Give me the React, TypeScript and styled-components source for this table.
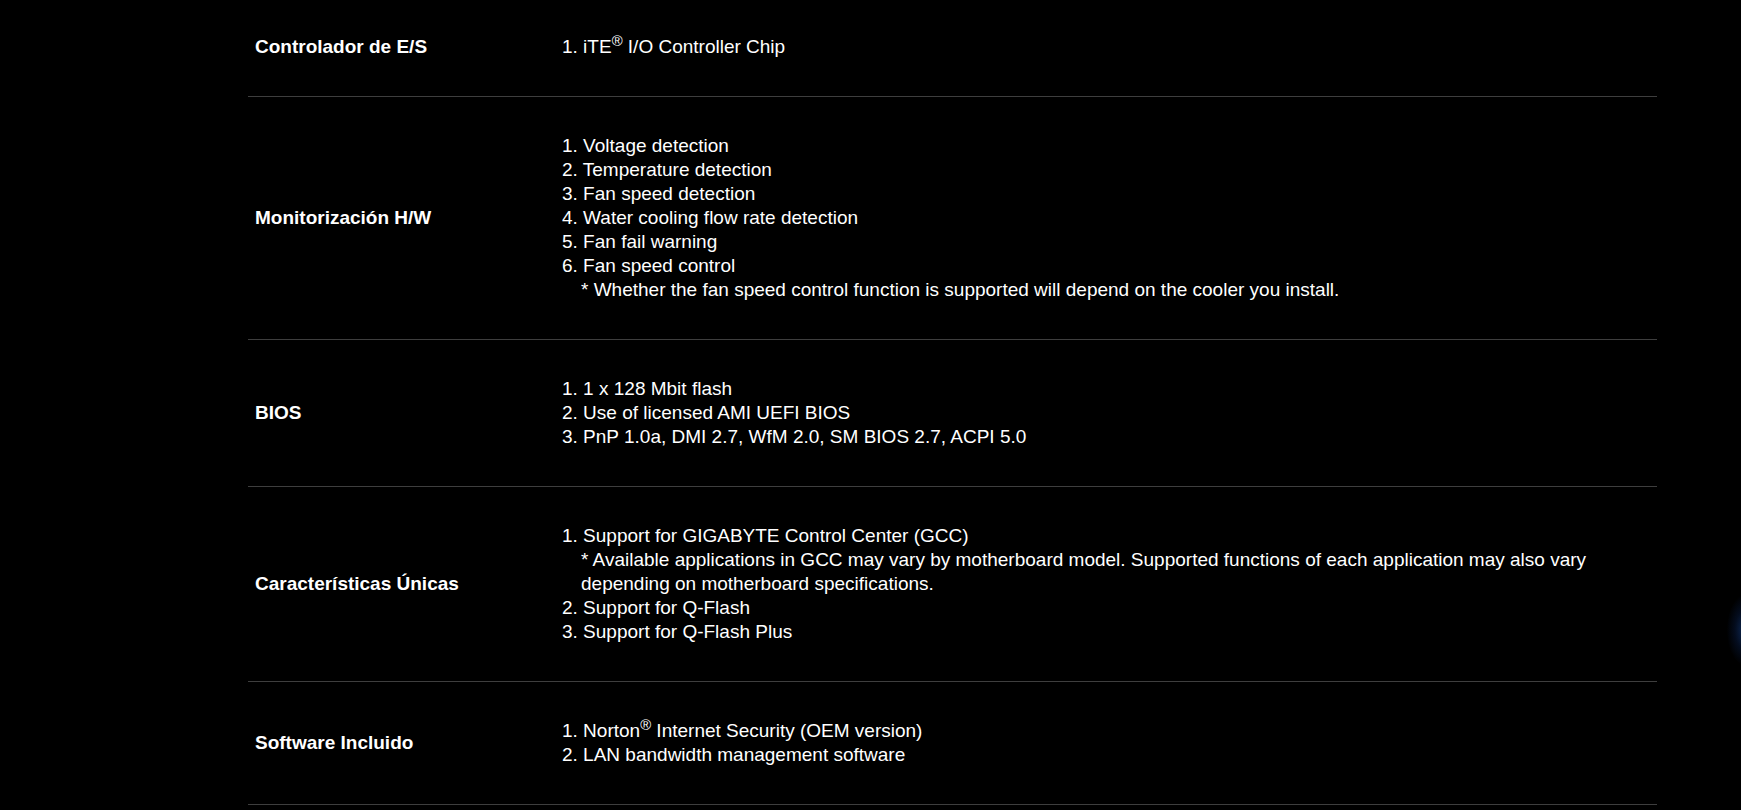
import React from "react";
import styled, { createGlobalStyle } from "styled-components";

const GlobalStyle = createGlobalStyle`
  html, body {
    margin: 0;
    padding: 0;
    background: #000;
  }
  body {
    font-family: "Liberation Sans", Arial, sans-serif;
    color: #fff;
    overflow: hidden;
  }
`;

const Page = styled.div`
  position: relative;
  width: 1741px;
  height: 810px;
  overflow: hidden;
  background: #000;
  padding: 0 84px 0 248px;
  box-sizing: border-box;
`;

const SpecTable = styled.div`
  display: flex;
  flex-direction: column;
  margin-top: -2px;
`;

const Row = styled.div`
  display: grid;
  grid-template-columns: 314px 1fr;
  align-items: center;
  padding: 37px 0;
  border-bottom: 1px solid #3e3e3e;
`;

const Label = styled.div`
  padding-left: 7px;
  font-size: 19px;
  font-weight: 700;
  line-height: 24px;
  color: #fff;
`;

const Value = styled.div`
  padding-right: 8px;
  font-size: 19px;
  line-height: 24px;
  color: #fff;
`;

const Item = styled.div``;

const Note = styled.div`
  padding-left: 19px;
`;

const Sup = styled.sup`
  font-size: 0.78em;
  line-height: 0;
  vertical-align: 0.5em;
`;

const Glow = styled.div`
  position: absolute;
  right: -22px;
  top: 595px;
  width: 36px;
  height: 70px;
  border-radius: 50%;
  background: radial-gradient(
    ellipse at center,
    rgba(30, 90, 190, 0.45) 0%,
    rgba(15, 50, 120, 0.25) 40%,
    rgba(0, 0, 0, 0) 72%
  );
`;

type Line = { text: React.ReactNode; note?: boolean };

const specs: { label: string; lines: Line[] }[] = [
  {
    label: "Controlador de E/S",
    lines: [
      {
        text: (
          <>
            1. iTE<Sup>®</Sup> I/O Controller Chip
          </>
        ),
      },
    ],
  },
  {
    label: "Monitorización H/W",
    lines: [
      { text: "1. Voltage detection" },
      { text: "2. Temperature detection" },
      { text: "3. Fan speed detection" },
      { text: "4. Water cooling flow rate detection" },
      { text: "5. Fan fail warning" },
      { text: "6. Fan speed control" },
      {
        text: "* Whether the fan speed control function is supported will depend on the cooler you install.",
        note: true,
      },
    ],
  },
  {
    label: "BIOS",
    lines: [
      { text: "1. 1 x 128 Mbit flash" },
      { text: "2. Use of licensed AMI UEFI BIOS" },
      { text: "3. PnP 1.0a, DMI 2.7, WfM 2.0, SM BIOS 2.7, ACPI 5.0" },
    ],
  },
  {
    label: "Características Únicas",
    lines: [
      { text: "1. Support for GIGABYTE Control Center (GCC)" },
      {
        text: "* Available applications in GCC may vary by motherboard model. Supported functions of each application may also vary depending on motherboard specifications.",
        note: true,
      },
      { text: "2. Support for Q-Flash" },
      { text: "3. Support for Q-Flash Plus" },
    ],
  },
  {
    label: "Software Incluido",
    lines: [
      {
        text: (
          <>
            1. Norton<Sup>®</Sup> Internet Security (OEM version)
          </>
        ),
      },
      { text: "2. LAN bandwidth management software" },
    ],
  },
];

export default function App() {
  return (
    <>
      <GlobalStyle />
      <Page>
        <SpecTable>
          {specs.map((s) => (
            <Row key={s.label}>
              <Label>{s.label}</Label>
              <Value>
                {s.lines.map((l, i) =>
                  l.note ? <Note key={i}>{l.text}</Note> : <Item key={i}>{l.text}</Item>
                )}
              </Value>
            </Row>
          ))}
        </SpecTable>
        <Glow />
      </Page>
    </>
  );
}
